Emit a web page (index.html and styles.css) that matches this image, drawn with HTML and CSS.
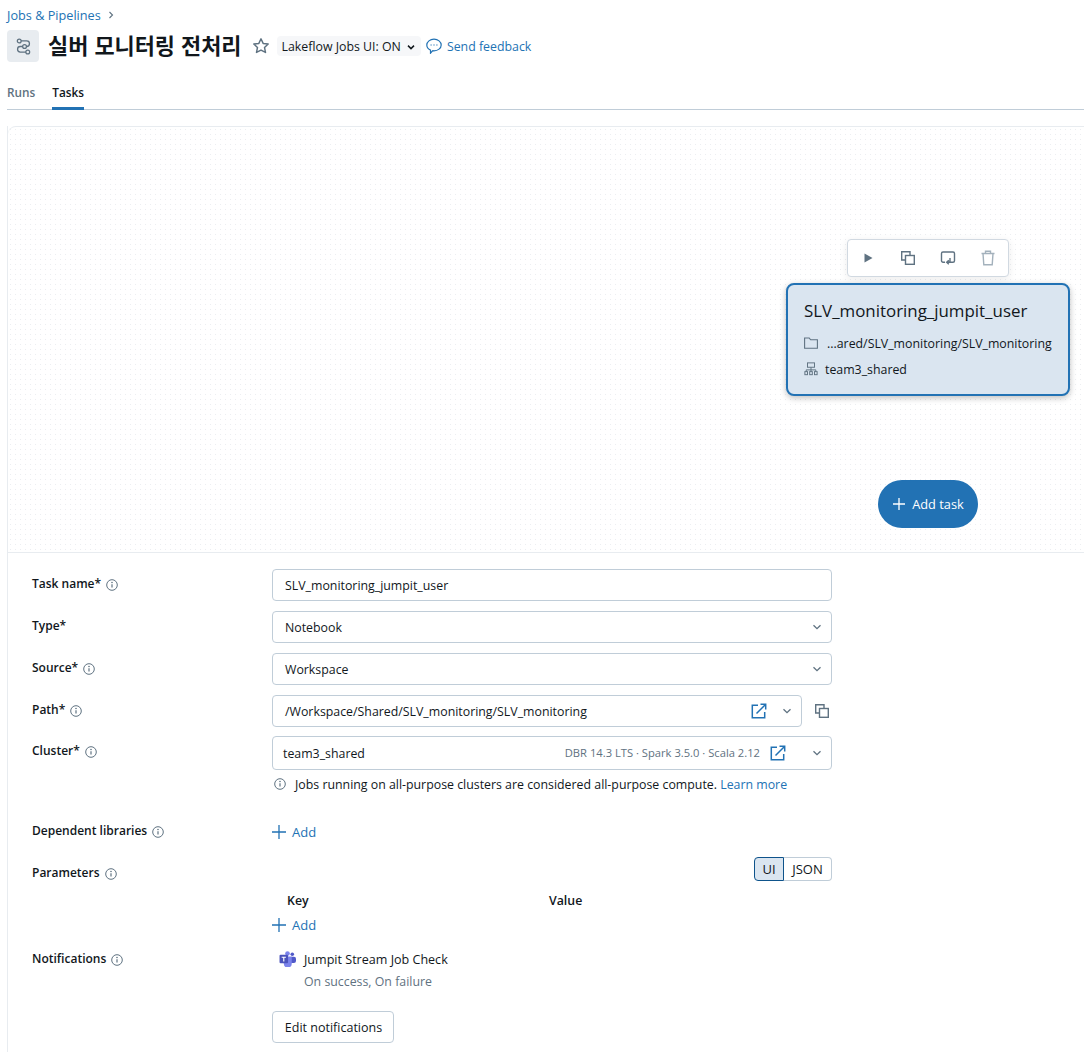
FILE: index.html
```html
<!DOCTYPE html>
<html lang="ko">
<head>
<meta charset="utf-8">
<title>실버 모니터링 전처리</title>
<link rel="stylesheet" href="styles.css">
</head>
<body>
<header class="header">
  <nav class="crumbs"><a class="link">Jobs &amp; Pipelines</a><svg class="crumb-sep" viewBox="0 0 8 8"><path d="M2.500 1l3 3-3 3" fill="none" stroke="#5f7281" stroke-width="1.100"/></svg></nav>
  <div class="title-row">
    <span class="job-icon"><svg viewBox="0 0 16 16" width="17" height="17" fill="none" stroke="#5f7281" stroke-width="1.200"><path d="M5 2.800h6a2.600 2.600 0 0 1 0 5.200H5a2.600 2.600 0 0 0 0 5.200h6"/><circle cx="4" cy="2.800" r="1.800" fill="#e8ecf0"/><circle cx="9" cy="8" r="1.800" fill="#e8ecf0"/><circle cx="12" cy="13.200" r="1.800" fill="#e8ecf0"/></svg></span>
    <h1 class="title">실버 모니터링 전처리</h1>
    <svg class="star" viewBox="0 0 16 16" width="18" height="18"><path d="M8 1.600l1.900 4.100 4.500.5-3.300 3.100.9 4.400L8 11.600l-4 2.100.9-4.400L1.600 6.200l4.500-.5z" fill="none" stroke="#5f7281" stroke-width="1.300" stroke-linejoin="round"/></svg>
    <span class="toggle">Lakeflow Jobs UI: ON<svg viewBox="0 0 10 10" width="10" height="10"><path d="M2 3.600l3 3 3-3" fill="none" stroke="#11171c" stroke-width="1.500"/></svg></span>
    <a class="feedback link"><svg viewBox="0 0 16 16" width="16" height="16" fill="none" stroke="#2272b4" stroke-width="1.200"><path d="M8 1.200c3.900 0 7.200 2.500 7.200 5.800S11.900 12.800 8 12.800c-.4 0-.8 0-1.200-.1L4.500 15.200v-3.100C2.300 11.100.8 9.200.8 7 .8 3.700 4.100 1.200 8 1.200z"/><path d="M4.500 7h1.200M7.400 7h1.200M10.300 7h1.200" stroke-width="1.200"/></svg><span class="nudge">Send feedback</span></a>
  </div>
  <div class="tabs"><span class="tab">Runs</span><span class="tab tab-active">Tasks</span></div>
</header>
<main class="panel">
  <section class="canvas">
    <div class="node-tools">
      <svg viewBox="0 0 16 16" width="16" height="16"><path d="M4.500 3.500l8 4.500-8 4.500z" fill="#5f7281"/></svg>
      <svg viewBox="0 0 16 16" width="16" height="16" fill="none" stroke="#5f7281" stroke-width="1.400"><path d="M10 5V1.700H1.700V10H5"/><rect x="5.500" y="5.500" width="8.800" height="8.800"/></svg>
      <svg viewBox="0 0 16 16" width="16" height="16" fill="none" stroke="#5f7281" stroke-width="1.400"><path d="M5 12.200H3a1.500 1.500 0 0 1-1.500-1.500V3.500A1.500 1.500 0 0 1 3 2h10a1.500 1.500 0 0 1 1.500 1.500v7.200a1.500 1.500 0 0 1-1.500 1.500H7.500"/><path d="M10 8v4.200H7M8.800 10.200L6.700 12.200l2.100 2"/></svg>
      <svg viewBox="0 0 16 16" width="16" height="16" fill="none" stroke="#a3b1bc" stroke-width="1.400"><path d="M1.500 3.500h13M5.500 3.500V1.300h5v2.200M3 3.500l.8 11.200h8.400l.8-11.200"/></svg>
    </div>
    <div class="node">
      <div class="node-title">SLV_monitoring_jumpit_user</div>
      <div class="node-line node-path"><svg viewBox="0 0 14 14" width="14" height="14" fill="none" stroke="#5f7281" stroke-width="1.100"><path d="M.6 2h4.600l1.400 1.800h6.800v8.400H.6z"/></svg><span class="nudge">...ared/SLV_monitoring/SLV_monitoring</span></div>
      <div class="node-line"><svg viewBox="0 0 16 16" width="14" height="14" fill="none" stroke="#5f7281" stroke-width="1.100"><rect x="4" y="1" width="8" height="5"/><path d="M8 6v3M2.500 11V9h11v2M8 9v2"/><rect x="1" y="11" width="3" height="3.500"/><rect x="6.500" y="11" width="3" height="3.500"/><rect x="12" y="11" width="3" height="3.500"/></svg><span class="nudge">team3_shared</span></div>
    </div>
    <button class="add-task"><svg viewBox="0 0 14 14" width="14" height="14"><path d="M7 1v12M1 7h12" stroke="#fff" stroke-width="1.300"/></svg>Add task</button>
  </section>
  <section class="form">
    <div class="row row-input"><div class="label">Task name*<svg class="info"><use href="#i"/></svg></div><div class="field"><span class="grow nudge">SLV_monitoring_jumpit_user</span></div></div>
    <div class="row row-input"><div class="label">Type*</div><div class="field"><span class="grow nudge">Notebook</span><svg class="chev"><use href="#c"/></svg></div></div>
    <div class="row row-input"><div class="label">Source*<svg class="info"><use href="#i"/></svg></div><div class="field"><span class="grow nudge">Workspace</span><svg class="chev"><use href="#c"/></svg></div></div>
    <div class="row row-path"><div class="label">Path*<svg class="info"><use href="#i"/></svg></div>
      <div class="path-wrap">
        <div class="field field-path"><span class="grow nudge">/Workspace/Shared/SLV_monitoring/SLV_monitoring</span><svg class="ext"><use href="#e"/></svg><svg class="chev"><use href="#c"/></svg></div>
        <svg class="copy" viewBox="0 0 16 16" width="16" height="16" fill="none" stroke="#5f7281" stroke-width="1.400"><path d="M10 5V1.700H1.700V10H5"/><rect x="5.500" y="5.500" width="8.800" height="8.800"/></svg>
      </div>
    </div>
    <div class="row row-cluster"><div class="label">Cluster*<svg class="info"><use href="#i"/></svg></div>
      <div>
        <div class="field field-cluster"><span class="grow nudge">team3_shared</span><span class="meta">DBR 14.3 LTS · Spark 3.5.0 · Scala 2.12</span><svg class="ext"><use href="#e"/></svg><svg class="chev"><use href="#c"/></svg></div>
        <div class="hint"><svg class="info"><use href="#i"/></svg><span class="nudge">Jobs running on all-purpose clusters are considered all-purpose compute. <a class="link">Learn more</a></span></div>
      </div>
    </div>
    <div class="row row-libs"><div class="label">Dependent libraries<svg class="info"><use href="#i"/></svg></div><a class="add link add-lib"><svg viewBox="0 0 14 14" width="14" height="14"><path d="M7 0v14M0 7h14" stroke="#2272b4" stroke-width="1.300"/></svg>Add</a></div>
    <div class="row row-params"><div class="label">Parameters<svg class="info"><use href="#i"/></svg></div>
      <div>
        <div class="seg"><span class="seg-on">UI</span><span class="seg-off">JSON</span></div>
        <div class="kv"><span>Key</span><span>Value</span></div>
        <a class="add link add-param"><svg viewBox="0 0 14 14" width="14" height="14"><path d="M7 0v14M0 7h14" stroke="#2272b4" stroke-width="1.300"/></svg>Add</a>
      </div>
    </div>
    <div class="row row-notify"><div class="label">Notifications<svg class="info"><use href="#i"/></svg></div>
      <div>
        <div class="teams"><svg viewBox="0 0 16 16" width="17" height="17"><circle cx="12.500" cy="4" r="1.700" fill="#5059c9"/><rect x="10" y="6.300" width="6" height="6" rx="2" fill="#5059c9"/><circle cx="8" cy="3.300" r="2.200" fill="#7b83eb"/><path d="M4 6h8v6.500a3.700 3.700 0 0 1-7.500.500z" fill="#7b83eb"/><rect x="0.500" y="4.500" width="8" height="8" rx="1" fill="#4b53bc"/><path d="M2.500 6.800h4M4.500 6.800v4" stroke="#fff" stroke-width="1.100"/></svg><div><div class="teams-name">Jumpit Stream Job Check</div><div class="muted">On success, On failure</div></div></div>
        <button class="edit">Edit notifications</button>
      </div>
    </div>
  </section>
</main>
<svg class="defs" aria-hidden="true">
  <symbol id="i" viewBox="0 0 12 12"><circle cx="6" cy="6" r="5.300" fill="none" stroke="#5f7281" stroke-width="1"/><path d="M6 5.300v3.200" stroke="#5f7281" stroke-width="1.200"/><circle cx="6" cy="3.500" r=".8" fill="#5f7281"/></symbol>
  <symbol id="c" viewBox="0 0 10 10"><path d="M1.500 3.200L5 6.700l3.500-3.500" fill="none" stroke="#5f7281" stroke-width="1.300"/></symbol>
  <symbol id="e" viewBox="0 0 16 16"><path d="M7 2.300H1.300v12.400h12.400V9" fill="none" stroke="#2272b4" stroke-width="1.500"/><path d="M5.500 10.500L14 2M9.500 1.300h5.200v5.200" fill="none" stroke="#2272b4" stroke-width="1.500"/></symbol>
</svg>
</body>
</html>
```
FILE: styles.css
```css
* { box-sizing: border-box; }
html, body { margin: 0; padding: 0; }
body {
  width: 1084px;
  height: 1052px;
  overflow: hidden;
  background: #fff;
  color: #11171c;
  font: 12.350px/20px "Open Sans", "Noto Sans", "Noto Sans CJK KR", sans-serif;
}
.link { color: #2272b4; }
.defs { display: none; }
.nudge { padding-top: 2px; }
.header { padding: 5px 0 0 7px; }
.crumbs { display: flex; align-items: center; gap: 6px; height: 20px; font-size: 12.700px; }
.crumb-sep { width: 8px; height: 8px; }
.title-row { display: flex; align-items: center; height: 32px; margin-top: 5px; }
.job-icon { width: 32px; height: 32px; border-radius: 4px; background: #e8ecf0; display: flex; align-items: center; justify-content: center; margin-right: 9px; }
.title { margin: -2px 0 0; font: 700 21.900px/32px "Noto Sans CJK KR", sans-serif; white-space: nowrap; }
.star { margin-left: 10px; }
.toggle { display: flex; align-items: center; gap: 5px; height: 20px; margin-left: 7px; padding: 2px 5px 0 5px; border-radius: 4px; background: #f6f7f9; }
.feedback { display: flex; align-items: center; gap: 5px; margin-left: 5px; }
.tabs { display: flex; gap: 17px; height: 48px; align-items: flex-end; border-bottom: 1px solid #c0cdd8; }
.tab { font-weight: 600; font-size: 11.800px; color: #5f7281; height: 28px; margin-bottom: -1px; line-height: 20px; border-bottom: 3px solid transparent; }
.tab-active { color: #11171c; border-bottom-color: #2272b4; }
.panel { margin: 16px 0 0 7px; border-left: 1px solid #e8ecf0; height: 926px; }
.canvas {
  position: relative;
  height: 427px;
  border-top: 1px solid #e8ecf0;
  border-bottom: 1px solid #e8ecf0;
  border-top-left-radius: 8px;
  background-color: #fff;
  background-image: radial-gradient(circle, #eceef1 0.6px, transparent 0.8px);
  background-size: 5px 5px;
}
.node-tools { position: absolute; left: 839px; top: 112px; width: 162px; height: 38px; background: #fff; border: 1px solid #d1d9e1; border-radius: 4px; box-shadow: 0 2px 8px rgba(0,0,0,.08); display: flex; align-items: center; justify-content: center; gap: 24px; }
.node { position: absolute; left: 778px; top: 156px; width: 284px; height: 113px; padding: 14px 16px; background: #dae5f0; border: 2px solid #2272b4; border-radius: 8px; box-shadow: 0 2px 6px rgba(0,0,0,.25); overflow: hidden; }
.node-title { font-size: 16.900px; line-height: 24px; margin-bottom: 7px; }
.node-line { display: flex; align-items: center; gap: 7px; height: 26px; white-space: nowrap; }
.node-line svg { flex: none; }
.node-path { gap: 9px; }
.add-task { position: absolute; left: 870px; top: 353px; width: 100px; height: 48px; border: 0; border-radius: 24px; background: #2272b4; color: #fff; font: 12.800px/20px "Open Sans", sans-serif; display: flex; align-items: center; justify-content: center; gap: 6px; padding: 0; }
.form { padding-top: 16px; }
.row { display: grid; grid-template-columns: 240px 560px; padding-left: 24px; }
.label { display: flex; align-items: center; gap: 5px; height: 20px; margin-top: 5px; font-weight: 600; font-size: 12px; }
.info { width: 12px; height: 12px; flex: none; margin-top: 2px; }
.row-input { height: 42px; }
.row-path { height: 41px; }
.row-cluster { height: 80px; }
.field { display: flex; align-items: center; height: 32px; border: 1px solid #c0cdd8; border-radius: 4px; padding: 0 9px 0 12px; }
.chev { width: 10px; height: 10px; flex: none; }
.grow { flex: 1; }
.ext { width: 16px; height: 16px; flex: none; }
.path-wrap { display: flex; align-items: center; height: 32px; gap: 12px; }
.field-path { width: 530px; }
.field-path .ext { margin-right: 15px; }
.copy { flex: none; }
.field-cluster { height: 34px; padding: 0 9px 0 10px; }
.meta { color: #5f7281; font-size: 11.200px; }
.field-cluster .ext { margin: 0 26px 0 10px; }
.hint { display: flex; align-items: center; gap: 9px; height: 20px; margin-top: 4px; padding-left: 2px; }
.hint .info { margin-top: 0; }
.row-libs { height: 42px; }
.add { display: flex; align-items: center; gap: 6px; height: 20px; font-size: 13px; }
.add-lib { margin-top: 6px; }
.row-params { height: 86px; }
.seg { display: flex; justify-content: flex-end; height: 24px; margin-top: -1px; font-size: 13px; }
.seg span { display: flex; align-items: center; justify-content: center; height: 24px; }
.seg-on { width: 30px; background: #dae5f0; border: 1px solid #0e538b; border-radius: 4px 0 0 4px; }
.seg-off { width: 48px; border: 1px solid #c0cdd8; border-left: 0; border-radius: 0 4px 4px 0; }
.kv { display: grid; grid-template-columns: 262px 1fr; padding-left: 15px; font-weight: 600; margin-top: 10px; height: 20px; }
.add-param { margin-top: 4px; }
.row-notify { height: 108px; }
.teams { display: flex; gap: 8px; padding: 6px 0 0 7px; }
.teams svg { flex: none; }
.teams-name { font-size: 12.550px; }
.muted { color: #5f7281; margin-top: 2px; }
.edit { display: block; margin-top: 19px; height: 32px; width: 122px; border: 1px solid #c0cdd8; border-radius: 4px; background: #fff; color: #11171c; font: 12.500px/20px "Open Sans", sans-serif; padding: 2px 0 0 1px; }
```
